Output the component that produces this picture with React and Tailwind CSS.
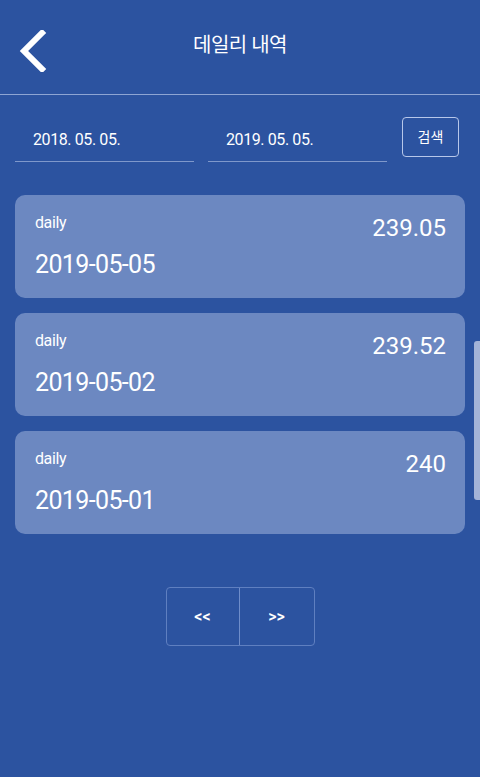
import { useState } from "react";

const rows = [
  { type: "daily", value: "239.05", date: "2019-05-05" },
  { type: "daily", value: "239.52", date: "2019-05-02" },
  { type: "daily", value: "240", date: "2019-05-01" },
];

export default function App() {
  const [from] = useState("2018. 05. 05.");
  const [to] = useState("2019. 05. 05.");

  return (
    <main
      className="relative min-h-[777px] w-full overflow-hidden bg-[#2c53a0] text-white"
      style={{ fontFamily: 'Roboto, "Noto Sans CJK KR", sans-serif' }}
    >
      <header className="relative flex h-[95px] items-center justify-center border-b border-[#8ea5d3]">
        <button className="absolute left-[18px] top-[30px] h-[42px] w-[32px]">
          <svg width="32" height="42" viewBox="0 0 32 42">
            <path d="M24 3 L6 21 L24 39" fill="none" stroke="white" strokeWidth="6" strokeLinecap="square" />
          </svg>
        </button>
        <h1 className="-mt-[5px] text-[20px] font-normal tracking-tight">데일리 내역</h1>
      </header>

      <div className="flex items-start px-[15px] pt-[22px]">
        <div className="flex h-[45px] w-[179px] items-center border-b border-[#7f98cb] pl-[18px] pt-[2px] text-[16px] tracking-tight">
          {from}
        </div>
        <div className="ml-[14px] flex h-[45px] w-[179px] items-center border-b border-[#7f98cb] pl-[18px] pt-[2px] text-[16px] tracking-tight">
          {to}
        </div>
        <button className="ml-[15px] flex h-[40px] w-[57px] items-center justify-center rounded-[4px] border-[1.5px] border-[#b7c7ea] text-[14px]">
          검색
        </button>
      </div>

      <div className="flex flex-col gap-[15px] px-[15px] pt-[33px]">
        {rows.map((r) => (
          <div key={r.date} className="h-[103px] rounded-[10px] bg-[#6c88c1] pl-[20px] pr-[19px]">
            <div className="flex items-start justify-between pt-[16px]">
              <span className="text-[16px] leading-[24px] tracking-tight">{r.type}</span>
              <span className="pt-[2px] text-[24px] leading-[30px]">{r.value}</span>
            </div>
            <div className="mt-[7px] text-[25px] leading-[30px] tracking-tight">{r.date}</div>
          </div>
        ))}
      </div>

      <div className="mt-[53px] flex justify-center">
        <div className="flex h-[59px] overflow-hidden rounded-[4px] border border-[#5f7fc0]">
          <button className="flex w-[73px] items-center justify-center border-r border-[#6f8dca] text-[16px] font-semibold">
            &lt;&lt;
          </button>
          <button className="flex w-[74px] items-center justify-center text-[16px] font-semibold">
            &gt;&gt;
          </button>
        </div>
      </div>

      <div className="absolute right-0 top-[341px] h-[159px] w-[6px] rounded-l-[3px] bg-[#a3b3d8]" />
    </main>
  );
}
